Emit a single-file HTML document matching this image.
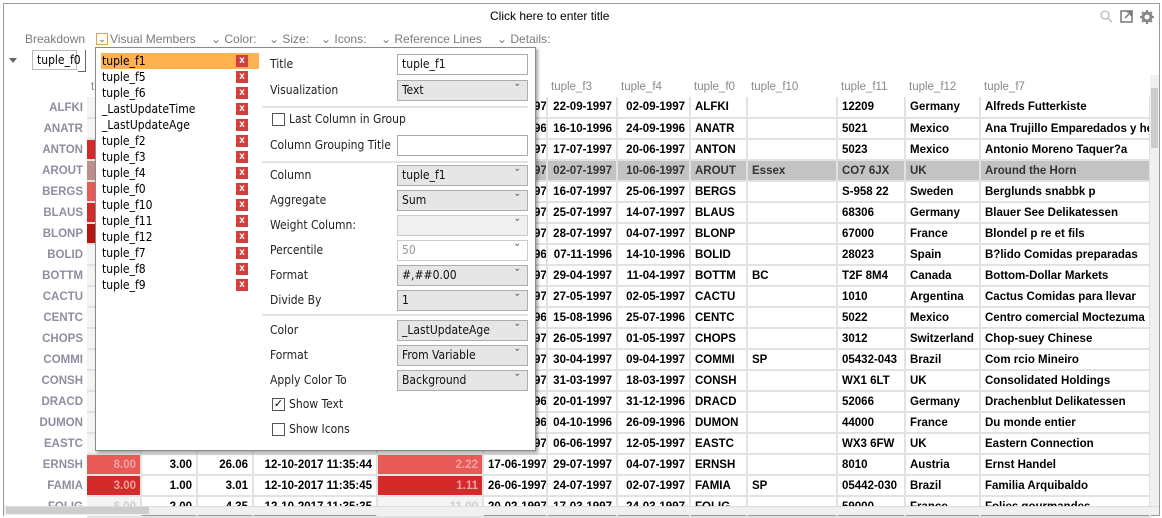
<!DOCTYPE html>
<html><head><meta charset="utf-8"><style>
*{box-sizing:border-box;margin:0;padding:0}
body{width:1162px;height:518px;background:#fff;position:relative;overflow:hidden;font-family:"Liberation Sans",Arial,sans-serif;font-size:12px}
.frame{position:absolute;left:3px;top:3px;width:1157px;height:513px;border:1px solid #9a9a9a}
.abs{position:absolute;white-space:nowrap}
.tb{color:#7a7a7a;font-size:12px;top:32px}
table{position:absolute;left:4px;top:76px;width:1146px;border-collapse:collapse;table-layout:fixed}
td{height:21px;border:1px solid #e2e2e2;border-width:0 2px 2px 0;font-weight:bold;font-size:11.5px;padding:0 4px;white-space:nowrap;overflow:hidden}
td.r{text-align:right}
td.h,tr.g td.h{font-weight:bold;color:#8d8ea0;text-align:right;border:none;padding-right:4px;background:#fff}
tr.hd td{font-weight:normal;color:#888;border:none}
tr.g td{background:#c3c3c3;color:#333}
td.e{background:#f4f4f4}
.pop{position:absolute;left:95px;top:47px;width:441px;height:404px;background:#fff;border:1px solid #8a8a8a;box-shadow:2px 2px 3px rgba(0,0,0,.35)}
.li{position:absolute;left:6px;font-family:"DejaVu Sans Condensed","Liberation Sans",sans-serif;font-size:12px;height:16px;line-height:16px;color:#000}
.x{position:absolute;left:140px;width:12px;height:12px;background:#d04040;color:#fff;font-size:10px;line-height:12px;text-align:center;font-weight:bold}
.lb{position:absolute;left:174px;font-family:"DejaVu Sans Condensed","Liberation Sans",sans-serif;font-size:12px;color:#222}
.in{position:absolute;left:301px;width:131px;height:21px;border:1px solid #aaa;background:#fff;font-family:"DejaVu Sans Condensed","Liberation Sans",sans-serif;font-size:12px;padding:2px 4px;color:#111}
.sel{background:#e6e6e6;border-color:#adadad}
.sel:after{content:"\2304";position:absolute;right:6px;top:-3px;font-size:10px;color:#555}
.dis{background:#f0f0f0;border-color:#ccc;color:#999}
.sep{position:absolute;left:166px;width:266px;height:2px;background:#e3e3e3}
.cb{position:absolute;left:176px;width:13px;height:13px;border:1px solid #555;background:#fff;font-size:11px;line-height:11px;text-align:center}
</style></head><body>
<div class="frame"></div>
<div class="abs" style="left:490px;top:9px;font-size:12px;color:#000">Click here to enter title</div>
<svg class="abs" style="left:1098px;top:9px" width="60" height="16">
<circle cx="7" cy="6" r="4" fill="none" stroke="#bbb" stroke-width="1.3"/><line x1="10" y1="9" x2="14" y2="13" stroke="#bbb" stroke-width="1.5"/>
<rect x="23" y="2" width="11" height="11" fill="none" stroke="#777" stroke-width="1.5"/><path d="M27 9 L33 3 M29 3h4v4" stroke="#777" stroke-width="1.5" fill="none"/>
<circle cx="49" cy="8" r="4" fill="none" stroke="#888" stroke-width="3"/><path d="M49 1v3M49 12v3M42 8h3M53 8h3M44 3l2 2M52 11l2 2M44 13l2-2M52 5l2-2" stroke="#888" stroke-width="2"/>
</svg>
<div class="abs tb" style="left:25px">Breakdown</div>
<div class="abs" style="left:96px;top:33px;width:12px;height:12px;border:1px solid #e0a050;font-size:9px;line-height:10px;text-align:center;color:#555">&#8964;</div>
<div class="abs tb" style="left:110px">Visual Members</div>
<div class="abs tb" style="left:211px">&#8964; Color:</div>
<div class="abs tb" style="left:269px">&#8964; Size:</div>
<div class="abs tb" style="left:321px">&#8964; Icons:</div>
<div class="abs tb" style="left:381px">&#8964; Reference Lines</div>
<div class="abs tb" style="left:497px">&#8964; Details:</div>
<div class="abs" style="left:9px;top:58px;width:0;height:0;border:4px solid transparent;border-top:5px solid #666"></div>
<div class="abs" style="left:32px;top:50px;width:45px;height:20px;border:1px solid #bbb;padding:2px 4px;font-family:'DejaVu Sans Condensed','Liberation Sans',sans-serif;font-size:12px">tuple_f0</div>
<div class="abs" style="left:78px;top:50px;width:8px;height:22px;border-right:1px solid #666;border-bottom:1px solid #666"></div>

<table>
<colgroup><col style="width:83px"><col style="width:54px"><col style="width:56px"><col style="width:56px"><col style="width:124px"><col style="width:106px"><col style="width:64px"><col style="width:70px"><col style="width:73px"><col style="width:57px"><col style="width:90px"><col style="width:68px"><col style="width:75px"><col style="width:170px"></colgroup>
<tr class="hd"><td></td><td>tu</td><td></td><td></td><td></td><td></td><td></td><td>tuple_f3</td><td>tuple_f4</td><td>tuple_f0</td><td>tuple_f10</td><td>tuple_f11</td><td>tuple_f12</td><td>tuple_f7</td></tr>
<tr><td class="h">ALFKI</td><td class="e"></td><td></td><td></td><td></td><td></td><td class="r">25-08-1997</td><td class="r">22-09-1997</td><td class="r">02-09-1997</td><td>ALFKI</td><td></td><td>12209</td><td>Germany</td><td>Alfreds Futterkiste</td></tr>
<tr><td class="h">ANATR</td><td class="e"></td><td></td><td></td><td></td><td></td><td class="r">18-09-1996</td><td class="r">16-10-1996</td><td class="r">24-09-1996</td><td>ANATR</td><td></td><td>5021</td><td>Mexico</td><td>Ana Trujillo Emparedados y helados</td></tr>
<tr><td class="h">ANTON</td><td style="background:#d42a2a"></td><td></td><td></td><td></td><td></td><td class="r">19-06-1997</td><td class="r">17-07-1997</td><td class="r">20-06-1997</td><td>ANTON</td><td></td><td>5023</td><td>Mexico</td><td>Antonio Moreno Taquer?a</td></tr>
<tr class="g"><td class="h">AROUT</td><td style="background:#bc8f8a"></td><td></td><td></td><td></td><td></td><td class="r">04-06-1997</td><td class="r">02-07-1997</td><td class="r">10-06-1997</td><td>AROUT</td><td>Essex</td><td>CO7 6JX</td><td>UK</td><td>Around the Horn</td></tr>
<tr><td class="h">BERGS</td><td style="background:#e85a56"></td><td></td><td></td><td></td><td></td><td class="r">18-06-1997</td><td class="r">16-07-1997</td><td class="r">25-06-1997</td><td>BERGS</td><td></td><td>S-958 22</td><td>Sweden</td><td>Berglunds snabbk p</td></tr>
<tr><td class="h">BLAUS</td><td style="background:#d42a2a"></td><td></td><td></td><td></td><td></td><td class="r">27-06-1997</td><td class="r">25-07-1997</td><td class="r">14-07-1997</td><td>BLAUS</td><td></td><td>68306</td><td>Germany</td><td>Blauer See Delikatessen</td></tr>
<tr><td class="h">BLONP</td><td style="background:#b81414"></td><td></td><td></td><td></td><td></td><td class="r">30-06-1997</td><td class="r">28-07-1997</td><td class="r">04-07-1997</td><td>BLONP</td><td></td><td>67000</td><td>France</td><td>Blondel p re et fils</td></tr>
<tr><td class="h">BOLID</td><td class="e"></td><td></td><td></td><td></td><td></td><td class="r">10-10-1996</td><td class="r">07-11-1996</td><td class="r">14-10-1996</td><td>BOLID</td><td></td><td>28023</td><td>Spain</td><td>B?lido Comidas preparadas</td></tr>
<tr><td class="h">BOTTM</td><td class="e"></td><td></td><td></td><td></td><td></td><td class="r">01-04-1997</td><td class="r">29-04-1997</td><td class="r">11-04-1997</td><td>BOTTM</td><td>BC</td><td>T2F 8M4</td><td>Canada</td><td>Bottom-Dollar Markets</td></tr>
<tr><td class="h">CACTU</td><td class="e"></td><td></td><td></td><td></td><td></td><td class="r">29-04-1997</td><td class="r">27-05-1997</td><td class="r">02-05-1997</td><td>CACTU</td><td></td><td>1010</td><td>Argentina</td><td>Cactus Comidas para llevar</td></tr>
<tr><td class="h">CENTC</td><td class="e"></td><td></td><td></td><td></td><td></td><td class="r">18-07-1996</td><td class="r">15-08-1996</td><td class="r">25-07-1996</td><td>CENTC</td><td></td><td>5022</td><td>Mexico</td><td>Centro comercial Moctezuma</td></tr>
<tr><td class="h">CHOPS</td><td class="e"></td><td></td><td></td><td></td><td></td><td class="r">28-04-1997</td><td class="r">26-05-1997</td><td class="r">01-05-1997</td><td>CHOPS</td><td></td><td>3012</td><td>Switzerland</td><td>Chop-suey Chinese</td></tr>
<tr><td class="h">COMMI</td><td class="e"></td><td></td><td></td><td></td><td></td><td class="r">02-04-1997</td><td class="r">30-04-1997</td><td class="r">09-04-1997</td><td>COMMI</td><td>SP</td><td>05432-043</td><td>Brazil</td><td>Com rcio Mineiro</td></tr>
<tr><td class="h">CONSH</td><td class="e"></td><td></td><td></td><td></td><td></td><td class="r">03-03-1997</td><td class="r">31-03-1997</td><td class="r">18-03-1997</td><td>CONSH</td><td></td><td>WX1 6LT</td><td>UK</td><td>Consolidated Holdings</td></tr>
<tr><td class="h">DRACD</td><td class="e"></td><td></td><td></td><td></td><td></td><td class="r">23-12-1996</td><td class="r">20-01-1997</td><td class="r">31-12-1996</td><td>DRACD</td><td></td><td>52066</td><td>Germany</td><td>Drachenblut Delikatessen</td></tr>
<tr><td class="h">DUMON</td><td class="e"></td><td></td><td></td><td></td><td></td><td class="r">06-09-1996</td><td class="r">04-10-1996</td><td class="r">26-09-1996</td><td>DUMON</td><td></td><td>44000</td><td>France</td><td>Du monde entier</td></tr>
<tr><td class="h">EASTC</td><td class="e"></td><td></td><td></td><td></td><td></td><td class="r">09-05-1997</td><td class="r">06-06-1997</td><td class="r">12-05-1997</td><td>EASTC</td><td></td><td>WX3 6FW</td><td>UK</td><td>Eastern Connection</td></tr>
<tr><td class="h">ERNSH</td><td class="r" style="background:#e85a58;color:#f0a0a0">8.00</td><td class="r">3.00</td><td class="r">26.06</td><td class="r">12-10-2017 11:35:44</td><td class="r" style="background:#e85a58;color:#f0a0a0">2.22</td><td class="r">17-06-1997</td><td class="r">29-07-1997</td><td class="r">04-07-1997</td><td>ERNSH</td><td></td><td>8010</td><td>Austria</td><td>Ernst Handel</td></tr>
<tr><td class="h">FAMIA</td><td class="r" style="background:#d42a2a;color:#f0a0a0">3.00</td><td class="r">1.00</td><td class="r">3.01</td><td class="r">12-10-2017 11:35:45</td><td class="r" style="background:#d42a2a;color:#f0a0a0">1.11</td><td class="r">26-06-1997</td><td class="r">24-07-1997</td><td class="r">02-07-1997</td><td>FAMIA</td><td>SP</td><td>05442-030</td><td>Brazil</td><td>Familia Arquibaldo</td></tr>
<tr><td class="h">FOLIG</td><td class="r e" style="color:#ccc">6.00</td><td class="r">2.00</td><td class="r">4.35</td><td class="r">12-10-2017 11:35:35</td><td class="r e" style="color:#ccc">11.00</td><td class="r">20-02-1997</td><td class="r">17-03-1997</td><td class="r">24-03-1997</td><td>FOLIG</td><td></td><td>59000</td><td>France</td><td>Folies gourmandes</td></tr>
</table>
<div class="abs" style="left:4px;top:506px;width:1155px;height:9px;background:#f0f0f0;border-top:1px solid #ddd"></div>
<div class="abs" style="left:6px;top:507px;width:143px;height:7px;background:#cdcdcd"></div>
<div class="abs" style="left:1150px;top:75px;width:9px;height:431px;background:#f0f0f0"></div>
<div class="abs" style="left:1151px;top:88px;width:7px;height:60px;background:#cdcdcd"></div>

<div class="pop">
<div class="abs" style="left:5px;top:5px;width:158px;height:16px;background:#ffb050"></div>
<div class="li" style="top:5px">tuple_f1</div><div class="x" style="top:7px">x</div>
<div class="li" style="top:21px">tuple_f5</div><div class="x" style="top:23px">x</div>
<div class="li" style="top:37px">tuple_f6</div><div class="x" style="top:39px">x</div>
<div class="li" style="top:53px">_LastUpdateTime</div><div class="x" style="top:55px">x</div>
<div class="li" style="top:69px">_LastUpdateAge</div><div class="x" style="top:71px">x</div>
<div class="li" style="top:85px">tuple_f2</div><div class="x" style="top:87px">x</div>
<div class="li" style="top:101px">tuple_f3</div><div class="x" style="top:103px">x</div>
<div class="li" style="top:117px">tuple_f4</div><div class="x" style="top:119px">x</div>
<div class="li" style="top:133px">tuple_f0</div><div class="x" style="top:135px">x</div>
<div class="li" style="top:149px">tuple_f10</div><div class="x" style="top:151px">x</div>
<div class="li" style="top:165px">tuple_f11</div><div class="x" style="top:167px">x</div>
<div class="li" style="top:181px">tuple_f12</div><div class="x" style="top:183px">x</div>
<div class="li" style="top:197px">tuple_f7</div><div class="x" style="top:199px">x</div>
<div class="li" style="top:213px">tuple_f8</div><div class="x" style="top:215px">x</div>
<div class="li" style="top:229px">tuple_f9</div><div class="x" style="top:231px">x</div>

<div class="lb" style="top:9px">Title</div><div class="in" style="top:6px">tuple_f1</div>
<div class="lb" style="top:35px">Visualization</div><div class="in sel" style="top:32px">Text</div>
<div class="sep" style="top:58px"></div>
<div class="cb" style="top:65px"></div><div class="lb" style="left:193px;top:64px">Last Column in Group</div>
<div class="lb" style="top:90px">Column Grouping Title</div><div class="in" style="top:87px"></div>
<div class="sep" style="top:113px"></div>
<div class="lb" style="top:120px">Column</div><div class="in sel" style="top:117px">tuple_f1</div>
<div class="lb" style="top:145px">Aggregate</div><div class="in sel" style="top:142px">Sum</div>
<div class="lb" style="top:170px">Weight Column:</div><div class="in sel dis" style="top:167px"></div>
<div class="lb" style="top:195px">Percentile</div><div class="in sel dis" style="top:192px;background:#fff">50</div>
<div class="lb" style="top:220px">Format</div><div class="in sel" style="top:217px">#,##0.00</div>
<div class="lb" style="top:245px">Divide By</div><div class="in sel" style="top:242px">1</div>
<div class="sep" style="top:266px"></div>
<div class="lb" style="top:275px">Color</div><div class="in sel" style="top:272px">_LastUpdateAge</div>
<div class="lb" style="top:300px">Format</div><div class="in sel" style="top:297px">From Variable</div>
<div class="lb" style="top:325px">Apply Color To</div><div class="in sel" style="top:322px">Background</div>
<div class="cb" style="top:350px">&#10003;</div><div class="lb" style="left:193px;top:349px">Show Text</div>
<div class="cb" style="top:375px"></div><div class="lb" style="left:193px;top:374px">Show Icons</div>
</div>
</body></html>
